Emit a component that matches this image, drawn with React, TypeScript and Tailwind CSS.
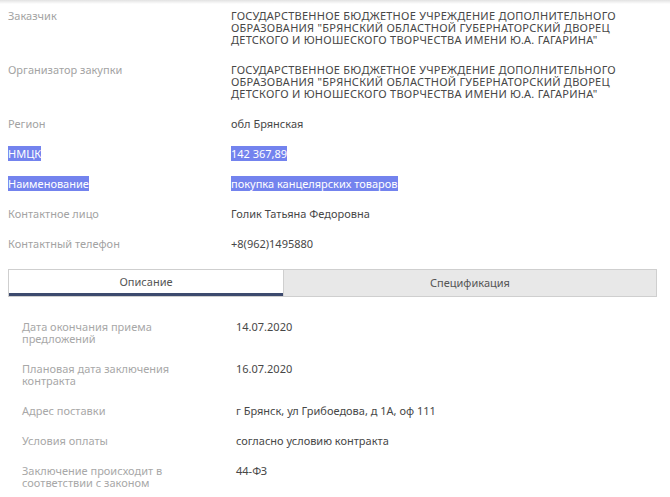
import { useState } from 'react';

const topRows: { label: string; value: string; selected?: boolean; caps?: boolean }[] = [
  {
    label: 'Заказчик',
    value:
      'ГОСУДАРСТВЕННОЕ БЮДЖЕТНОЕ УЧРЕЖДЕНИЕ ДОПОЛНИТЕЛЬНОГО ОБРАЗОВАНИЯ "БРЯНСКИЙ ОБЛАСТНОЙ ГУБЕРНАТОРСКИЙ ДВОРЕЦ ДЕТСКОГО И ЮНОШЕСКОГО ТВОРЧЕСТВА ИМЕНИ Ю.А. ГАГАРИНА"',
    caps: true,
  },
  {
    label: 'Организатор закупки',
    value:
      'ГОСУДАРСТВЕННОЕ БЮДЖЕТНОЕ УЧРЕЖДЕНИЕ ДОПОЛНИТЕЛЬНОГО ОБРАЗОВАНИЯ "БРЯНСКИЙ ОБЛАСТНОЙ ГУБЕРНАТОРСКИЙ ДВОРЕЦ ДЕТСКОГО И ЮНОШЕСКОГО ТВОРЧЕСТВА ИМЕНИ Ю.А. ГАГАРИНА"',
    caps: true,
  },
  { label: 'Регион', value: 'обл Брянская' },
  { label: 'НМЦК', value: '142 367,89', selected: true },
  { label: 'Наименование', value: 'покупка канцелярских товаров', selected: true },
  { label: 'Контактное лицо', value: 'Голик Татьяна Федоровна' },
  { label: 'Контактный телефон', value: '+8(962)1495880' },
];

const descRows = [
  { label: 'Дата окончания приема предложений', value: '14.07.2020' },
  { label: 'Плановая дата заключения контракта', value: '16.07.2020' },
  { label: 'Адрес поставки', value: 'г Брянск, ул Грибоедова, д 1А, оф 111' },
  { label: 'Условия оплаты', value: 'согласно условию контракта' },
  { label: 'Заключение происходит в соответствии с законом', value: '44-ФЗ' },
];

function Hl({ on, children }: { on?: boolean; children: string }) {
  if (!on) return <>{children}</>;
  return <span className="bg-[#7383ee] text-white">{children}</span>;
}

export default function App() {
  const [tab, setTab] = useState(0);

  return (
    <div className="min-h-[497px] w-[670px] bg-white font-['Noto_Sans',sans-serif] text-[11px] leading-[12px]">
      <div className="h-[4px] bg-gradient-to-b from-[#e2e2e2] to-white" />

      <div className="px-2">
        {topRows.map((row, i) => (
          <div key={row.label} className={`flex pb-[9px] ${i === 0 ? 'pt-[6px]' : 'pt-[9px]'}`}>
            <div className="w-[223px] shrink-0 text-[#a3a3a3]">
              <Hl on={row.selected}>{row.label}</Hl>
            </div>
            <div className={`w-[410px] text-[#474747] ${row.caps ? 'tracking-[0.25px]' : ''}`}>
              <Hl on={row.selected}>{row.value}</Hl>
            </div>
          </div>
        ))}

        {/* Tabs */}
        <div className="mt-[10px] flex h-[28px] w-[649px] border border-[#cfcfcf]">
          <button
            onClick={() => setTab(0)}
            className={`flex w-[274px] items-center justify-center border-b-[3px] text-[#555] ${
              tab === 0 ? 'border-[#3c4a6e] bg-white' : 'border-transparent bg-[#e8e8e8]'
            }`}
          >
            Описание
          </button>
          <button
            onClick={() => setTab(1)}
            className={`flex flex-1 items-center justify-center border-l border-[#cfcfcf] text-[#555] ${
              tab === 1 ? 'border-b-[3px] border-b-[#3c4a6e] bg-white' : 'bg-[#e8e8e8]'
            }`}
          >
            Спецификация
          </button>
        </div>

        <div className="mt-[15px] px-[14px]">
          {descRows.map((row) => (
            <div key={row.label} className="flex py-[9px]">
              <div className="w-[214px] shrink-0 pr-[40px] text-[#a8a8a8]">{row.label}</div>
              <div className="text-[#474747]">{row.value}</div>
            </div>
          ))}
        </div>
      </div>
    </div>
  );
}
